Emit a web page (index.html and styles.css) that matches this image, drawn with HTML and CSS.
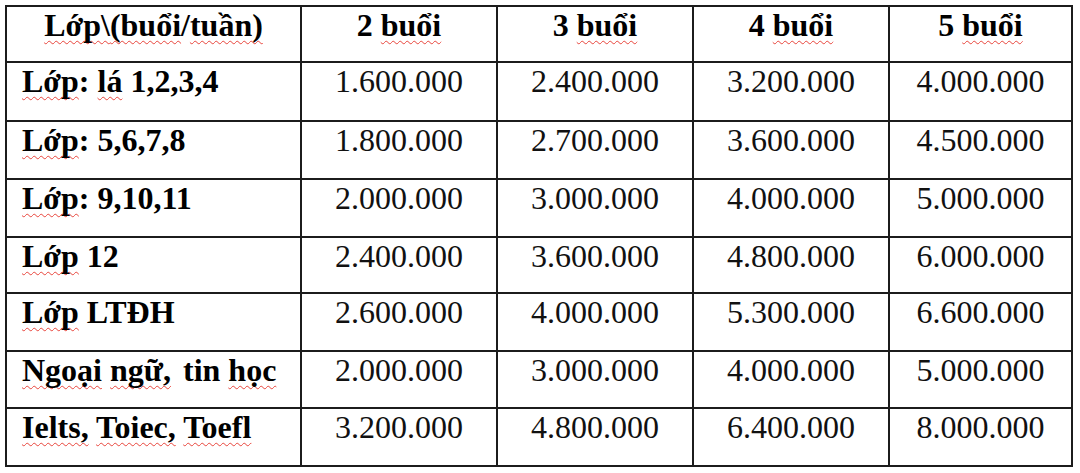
FILE: index.html
```html
<!DOCTYPE html>
<html lang="vi">
<head>
<meta charset="utf-8">
<title>Bảng học phí</title>
<link rel="stylesheet" href="styles.css">
</head>
<body>
<table class="fees">
  <colgroup>
    <col class="c-label">
    <col class="c-num">
    <col class="c-num">
    <col class="c-num">
    <col class="c-last">
  </colgroup>
  <tr class="r-head">
    <th><span class="sp">Lớp\</span><span class="sp">(buổi</span>/<span class="sp">tuần)</span></th>
    <th>2 <span class="sp">buổi</span></th>
    <th>3 <span class="sp">buổi</span></th>
    <th>4 <span class="sp">buổi</span></th>
    <th>5 <span class="sp">buổi</span></th>
  </tr>
  <tr class="r1">
    <td class="lbl"><span class="sp">Lớp</span>: <span class="sp">lá</span> 1,2,3,4</td>
    <td>1.600.000</td><td>2.400.000</td><td>3.200.000</td><td>4.000.000</td>
  </tr>
  <tr class="r2">
    <td class="lbl"><span class="sp">Lớp</span>: 5,6,7,8</td>
    <td>1.800.000</td><td>2.700.000</td><td>3.600.000</td><td>4.500.000</td>
  </tr>
  <tr class="r3">
    <td class="lbl"><span class="sp">Lớp</span>: 9,10,11</td>
    <td>2.000.000</td><td>3.000.000</td><td>4.000.000</td><td>5.000.000</td>
  </tr>
  <tr class="r4">
    <td class="lbl"><span class="sp">Lớp</span> 12</td>
    <td>2.400.000</td><td>3.600.000</td><td>4.800.000</td><td>6.000.000</td>
  </tr>
  <tr class="r5">
    <td class="lbl"><span class="sp">Lớp</span> LTĐH</td>
    <td>2.600.000</td><td>4.000.000</td><td>5.300.000</td><td>6.600.000</td>
  </tr>
  <tr class="r6">
    <td class="lbl"><span class="sp">Ngoại</span> <span class="sp wide">ngữ,</span> tin <span class="sp">học</span></td>
    <td>2.000.000</td><td>3.000.000</td><td>4.000.000</td><td>5.000.000</td>
  </tr>
  <tr class="r7">
    <td class="lbl"><span class="sp">Ielts,</span> <span class="sp">Toiec,</span> <span class="sp">Toefl</span></td>
    <td>3.200.000</td><td>4.800.000</td><td>6.400.000</td><td>8.000.000</td>
  </tr>
</table>
</body>
</html>
```

FILE: styles.css
```css
html, body {
  margin: 0;
  padding: 0;
  background: #ffffff;
}

body {
  padding: 5px 0 0 5px;
  font-family: "Liberation Serif", "Times New Roman", serif;
  color: #111111;
}

.fees {
  border-collapse: collapse;
  table-layout: fixed;
  width: 1068px;
  font-size: 32px;
  line-height: 36px;
}

.c-label { width: 295px; }
.c-num { width: 196px; }
.c-last { width: 183px; }

.fees th,
.fees td {
  border: 2px solid #1c1c1c;
  padding: 0;
  vertical-align: top;
  text-align: center;
  white-space: nowrap;
  font-weight: normal;
}

.fees th {
  font-weight: bold;
  color: #000000;
}

.fees td.lbl {
  text-align: left;
  padding-left: 15px;
  font-weight: bold;
  color: #000000;
}

.r-head { height: 56px; }
.r1 { height: 59px; }
.r2 { height: 58px; }
.r3 { height: 58px; }
.r4 { height: 56px; }
.r5 { height: 58px; }
.r6 { height: 57px; }
.r7 { height: 58px; }

.sp {
  text-decoration-line: underline;
  text-decoration-style: wavy;
  text-decoration-color: #e8453c;
  text-decoration-thickness: 1px;
  text-underline-offset: 4px;
  text-decoration-skip-ink: none;
}

.wide {
  margin-right: 4px;
}
```
